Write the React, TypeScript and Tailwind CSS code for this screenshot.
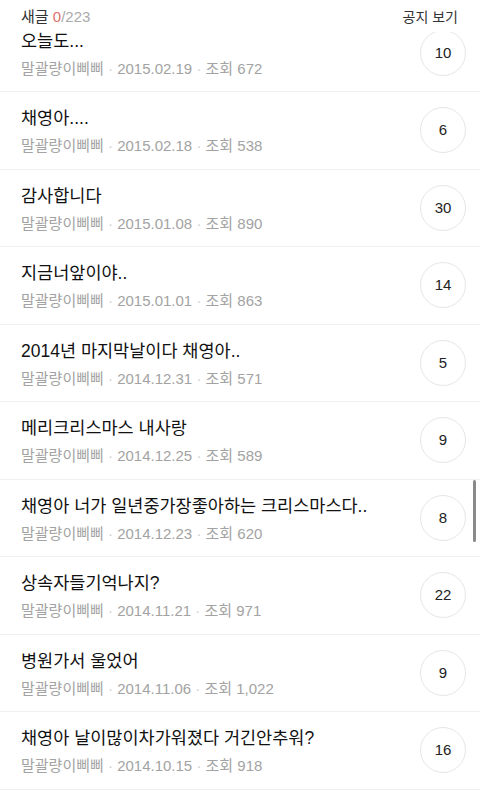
const posts = [
  { title: '오늘도...', date: '2015.02.19', views: '672', comments: 10 },
  { title: '채영아....', date: '2015.02.18', views: '538', comments: 6 },
  { title: '감사합니다', date: '2015.01.08', views: '890', comments: 30 },
  { title: '지금너앞이야..', date: '2015.01.01', views: '863', comments: 14 },
  { title: '2014년 마지막날이다 채영아..', date: '2014.12.31', views: '571', comments: 5 },
  { title: '메리크리스마스 내사랑', date: '2014.12.25', views: '589', comments: 9 },
  { title: '채영아 너가 일년중가장좋아하는 크리스마스다..', date: '2014.12.23', views: '620', comments: 8 },
  { title: '상속자들기억나지?', date: '2014.11.21', views: '971', comments: 22 },
  { title: '병원가서 울었어', date: '2014.11.06', views: '1,022', comments: 9 },
  { title: '채영아 날이많이차가워졌다 거긴안추워?', date: '2014.10.15', views: '918', comments: 16 },
]

function PostRow({ post }: { post: (typeof posts)[number] }) {
  return (
    <div className="h-[77.5px] flex items-center pl-[21px] pr-[14px] border-b border-[#efefef]">
      <div className="flex-1 min-w-0 pt-[4px]">
        <div className="text-[17.5px] leading-[28px] text-[#111] truncate">{post.title}</div>
        <div className="text-[15px] leading-[28px] text-[#a3a3a3]">
          말괄량이삐삐 <span className="text-[#cfcfcf]">·</span> {post.date}{' '}
          <span className="text-[#cfcfcf]">·</span> 조회 {post.views}
        </div>
      </div>
      <div className="w-[46px] h-[46px] rounded-full border border-[#e6e6e6] flex items-center justify-center text-[15px] text-[#222] shrink-0">
        {post.comments}
      </div>
    </div>
  )
}

export default function App() {
  return (
    <div className="relative w-[480px] h-[800px] overflow-hidden bg-white font-['Liberation_Sans','Noto_Sans_CJK_KR',sans-serif]">
      <div className="pt-[14.5px]">
        {posts.map((p) => (
          <PostRow key={p.date + p.title} post={p} />
        ))}
      </div>

      <div className="absolute top-0 left-0 right-0 h-[32px] bg-white flex items-start justify-between pt-[8px] pl-[21px] pr-[22px] leading-[18px]">
        <div className="text-[15px] text-[#333]">
          새글 <span className="text-[#e0716c]">0</span>
          <span className="text-[#aaa]">/223</span>
        </div>
        <div className="text-[14px] text-[#333]">공지 보기</div>
      </div>

      <div className="absolute right-[4px] top-[480px] w-[3px] h-[62px] rounded-full bg-[#8a8a8a]" />
    </div>
  )
}
